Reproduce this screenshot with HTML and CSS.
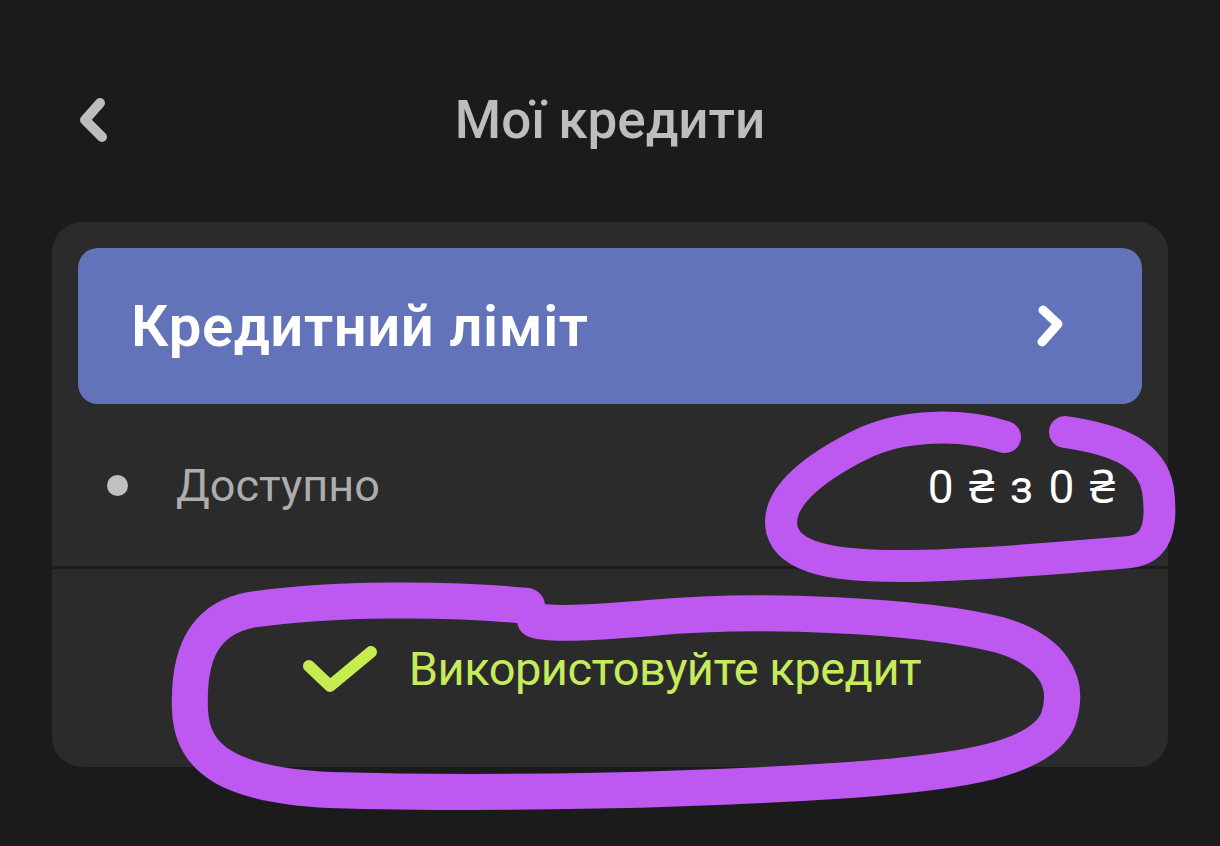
FILE: index.html
```html
<!DOCTYPE html>
<html lang="uk">
<head>
    <meta charset="UTF-8">
    <meta name="viewport" content="width=device-width, initial-scale=1.0">
    <title>Мої кредити</title>
    <link rel="stylesheet" href="styles.css">
</head>

<body>
    <div class="topbar">
        <div class="back">
            <svg width="36" height="50" viewBox="0 0 36 50">
                <path d="M25 8 L10 25 L27 42" fill="none" stroke="#bdbdbd" stroke-width="10" stroke-linecap="round" stroke-linejoin="round"/>
            </svg>
        </div>
        <div class="title">Мої кредити</div>
        <div></div>
    </div>

    <div class="card">
        <div class="card-head">
            <span>Кредитний ліміт</span>
            <svg width="30" height="44" viewBox="0 0 30 44">
                <path d="M8 6 L23 20 L7 38" fill="none" stroke="#fff" stroke-width="9" stroke-linecap="round" stroke-linejoin="round"/>
            </svg>
        </div>
        <div class="row">
            <div class="row-label">
                <span class="dot"></span>
                <span>Доступно</span>
            </div>
            <div class="amount">0 ₴ з 0 ₴</div>
        </div>
        <div class="action">
            <svg width="80" height="54" viewBox="0 0 80 54">
                <path d="M10 24 L31 44 L72 10" fill="none" stroke="#c6ec50" stroke-width="12" stroke-linecap="round" stroke-linejoin="round"/>
            </svg>
            <span>Використовуйте кредит</span>
        </div>
    </div>

    <!-- marker scribbles drawn over the screenshot -->
    <svg class="marks" width="1220" height="846" viewBox="0 0 1220 846">
        <path d="M1005 437 C960 422 900 425 860 445 C810 470 775 500 782 530 C790 560 840 566 900 566 C980 566 1080 556 1130 552 C1160 548 1162 520 1158 490 C1152 455 1120 440 1065 432"
              fill="none" stroke="#bd59f1" stroke-width="32" stroke-linecap="round" stroke-linejoin="round"/>
        <path d="M527 606 C450 598 330 598 250 610 C200 620 188 660 190 710 C192 760 230 785 330 790 C500 795 700 790 850 780 C960 772 1040 760 1058 720 C1072 680 1050 650 1000 635 C920 615 760 608 650 618 C590 623 545 625 535 620"
              fill="none" stroke="#bd59f1" stroke-width="36" stroke-linecap="round" stroke-linejoin="round"/>
    </svg>
</body>
</html>
```

FILE: styles.css
```css
* {
    box-sizing: border-box;
}

body {
    margin: 0;
    padding: 0;
    background-color: #1b1b1b;
    font-family: Roboto, "Noto Sans", sans-serif;
    width: 1220px;
    height: 846px;
    overflow: hidden;
    position: relative;
}

.topbar {
    display: grid;
    grid-template-columns: 1fr auto 1fr;
    align-items: center;
    height: 124px;
    margin-top: 58px;
}

.back {
    padding-left: 75px;
    display: flex;
    align-items: center;
}

.title {
    color: #bdbdbd;
    font-size: 53px;
    font-weight: 500;
}

.card {
    margin: 40px 52px 0;
    background-color: #2b2b2b;
    border-radius: 30px;
    padding: 26px 26px 0;
    height: 545px;
}

.card-head {
    background-color: #6373b9;
    border-radius: 20px;
    height: 156px;
    display: flex;
    align-items: center;
    justify-content: space-between;
    padding: 0 77px 0 53px;
    color: #fff;
    font-size: 58px;
    font-weight: 600;
    letter-spacing: 0.6px;
}

.row {
    height: 165px;
    margin: 0 -26px;
    padding: 0 53px 0 55px;
    display: flex;
    align-items: center;
    justify-content: space-between;
    border-bottom: 3px solid #1c1c1c;
}

.row-label {
    display: flex;
    align-items: center;
    gap: 48px;
    color: #adadad;
    font-size: 45px;
}

.dot {
    width: 21px;
    height: 21px;
    border-radius: 50%;
    background-color: #c0c0c0;
}

.amount {
    color: #fff;
    font-size: 46px;
    word-spacing: 4px;
}

.action {
    height: 195px;
    display: flex;
    align-items: center;
    justify-content: center;
    gap: 30px;
    color: #c6ec5c;
    font-size: 47px;
    letter-spacing: -0.5px;
    padding-top: 4px;
}

.marks {
    position: absolute;
    left: 0;
    top: 0;
    pointer-events: none;
}
```
